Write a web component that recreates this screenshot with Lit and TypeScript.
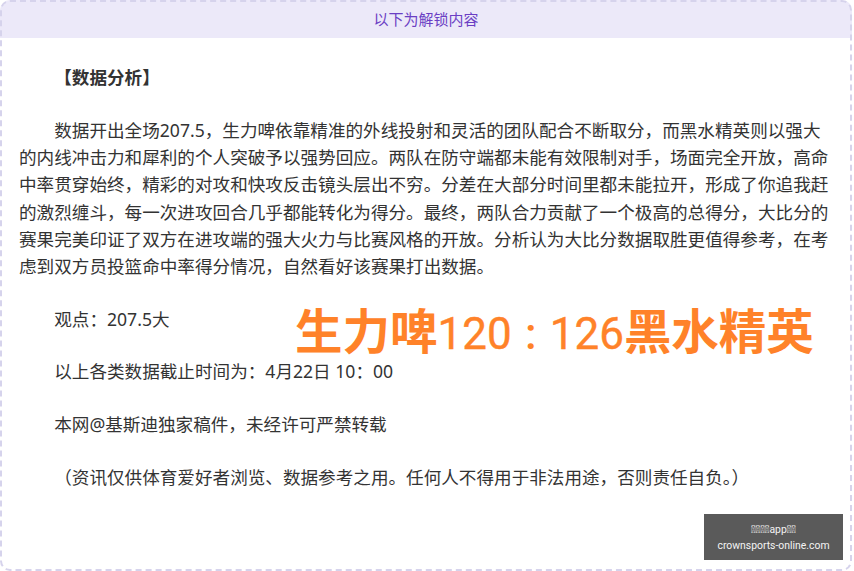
import { LitElement, html, css } from "lit";
import { customElement } from "lit/decorators.js";

@customElement("app-root")
export class AppRoot extends LitElement {
  static styles = css`
    :host { display: block; width: 854px; height: 571px; overflow: hidden; position: relative; background: #fff;
      font-family: "Noto Sans", "Noto Sans CJK SC", sans-serif; color: #333; }
    .box { box-sizing: border-box; height: 571px; width: 852px; border: 2px dashed #d6d3ec; border-radius: 10px; overflow: hidden;
      background: linear-gradient(#ece9f9 38px, #fff 38px) border-box; }
    .bar { height: 36px; color: #6b3fc4; font-size: 15px; line-height: 35px; text-align: center; }
    .body { padding: 0 17px; font-size: 17.6px; line-height: 27.28px; }
    p { margin: 0 0 25.4px; text-indent: 35.2px; }
    .h { font-weight: 700; margin-top: 26px; }
    .over { position: absolute; left: 295px; top: 301px; font-size: 47.5px; line-height: 60px; font-weight: 700; color: #ff8229; white-space: nowrap; }
    .num { font-family: Roboto, sans-serif; font-weight: 400; font-size: 44px; -webkit-text-stroke: 0.4px #ff8229; }
    .colon { display: inline-block; width: 38px; text-align: center; font-family: Roboto, sans-serif; font-weight: 500; font-size: 44px; }
    .wm { position: absolute; left: 704px; top: 514px; width: 139px; height: 46px; background: #5a5a5a; color: #f4f4f4; font-family: Roboto, sans-serif; font-size: 10.4px; line-height: 16px; text-align: center; padding-top: 8px; box-sizing: border-box; }
  `;
  render() {
    return html`
      <div class="box">
        <div class="bar">以下为解锁内容</div>
        <div class="body">
          <p class="h">【数据分析】</p>
          <p>数据开出全场207.5，生力啤依靠精准的外线投射和灵活的团队配合不断取分，而黑水精英则以强大的内线冲击力和犀利的个人突破予以强势回应。两队在防守端都未能有效限制对手，场面完全开放，高命中率贯穿始终，精彩的对攻和快攻反击镜头层出不穷。分差在大部分时间里都未能拉开，形成了你追我赶的激烈缠斗，每一次进攻回合几乎都能转化为得分。最终，两队合力贡献了一个极高的总得分，大比分的赛果完美印证了双方在进攻端的强大火力与比赛风格的开放。分析认为大比分数据取胜更值得参考，在考虑到双方员投篮命中率得分情况，自然看好该赛果打出数据。</p>
          <p>观点：207.5大</p>
          <p>以上各类数据截止时间为：4月22日 10：00</p>
          <p>本网@基斯迪独家稿件，未经许可严禁转载</p>
          <p>（资讯仅供体育爱好者浏览、数据参考之用。任何人不得用于非法用途，否则责任自负。）</p>
        </div>
      </div>
      <div class="over">生力啤<span class="num">120</span><span class="colon">:</span><span class="num">126</span>黑水精英</div>
      <div class="wm">\uE000\uE000\uE000\uE000app\uE000\uE000<br />crownsports-online.com</div>
    `;
  }
}
